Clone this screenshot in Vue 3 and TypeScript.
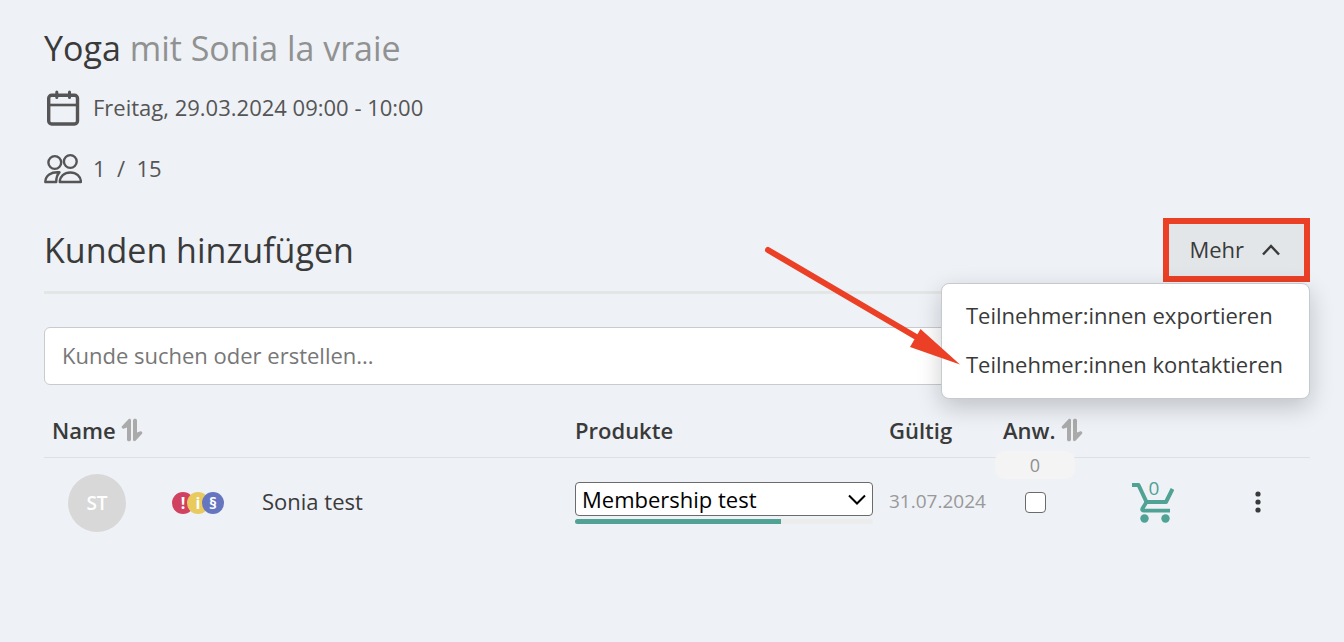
<script setup lang="ts">
import { ref } from 'vue'

interface Participant {
  initials: string
  name: string
  product: string
  usage: number
  validUntil: string
  cart: number
}

const menuOpen = ref(true)
const search = ref('')
const menuItems: string[] = ['Teilnehmer:innen exportieren', 'Teilnehmer:innen kontaktieren']
const participants: Participant[] = [
  { initials: 'ST', name: 'Sonia test', product: 'Membership test', usage: 69, validUntil: '31.07.2024', cart: 0 },
]
</script>

<template>
  <main class="page">
    <h1 class="title">Yoga <span class="teacher">mit Sonia la vraie</span></h1>

    <div class="info">
      <svg class="info-icon" viewBox="0 0 38 38" fill="none" stroke="currentColor" stroke-width="3.400" aria-hidden="true">
        <rect x="4.700" y="7.200" width="28.800" height="28.800" rx="3" />
        <path d="M5 17h28" stroke-width="2.600" />
        <path d="M12.800 4v5.500M25.500 4v5.500" stroke-width="3" stroke-linecap="round" />
      </svg>
      <span>Freitag, 29.03.2024 09:00 - 10:00</span>
    </div>
    <div class="info people">
      <svg class="info-icon" viewBox="0 0 38 38" fill="none" stroke="currentColor" stroke-width="2.400" stroke-linejoin="round" aria-hidden="true">
        <circle cx="10.800" cy="13.500" r="6.400" />
        <circle cx="26.300" cy="12.500" r="6.400" />
        <path d="M15.500 23.300C7 22.500 1.300 26.500 1.300 33h10.900c0-4 .9-7.300 3.300-9.700z" />
        <path d="M15.800 33c0-5.500 4.500-9.500 10.500-9.500S36.900 27.500 36.900 33z" />
      </svg>
      <span class="count">1&nbsp; /&nbsp; 15</span>
    </div>

    <header class="section-head">
      <h2 class="section-title">Kunden hinzufügen</h2>
      <div class="more">
        <button class="more-button" type="button" :aria-expanded="menuOpen" @click="menuOpen = !menuOpen">
          Mehr
          <svg width="20" height="20" viewBox="0 0 20 20" fill="none" stroke="currentColor" stroke-width="2.500" aria-hidden="true">
            <path d="M2 15.500L10 7l8 8.500" />
          </svg>
        </button>
        <div v-if="menuOpen" class="menu">
          <button v-for="item in menuItems" :key="item" class="menu-item" type="button">{{ item }}</button>
          <svg class="pointer" width="200" height="124" viewBox="0 0 200 124" aria-hidden="true">
            <path d="M6 6L156 94" stroke="#eb4025" stroke-width="6" stroke-linecap="round" />
            <path d="M198 120.500L158.500 85 148 103z" fill="#eb4025" />
          </svg>
        </div>
      </div>
    </header>

    <input v-model="search" class="search" type="text" aria-label="Kunde suchen oder erstellen" placeholder="Kunde suchen oder erstellen..." />

    <table class="list">
      <colgroup>
        <col class="c-avatar" />
        <col class="c-flags" />
        <col />
        <col class="c-product" />
        <col class="c-valid" />
        <col class="c-present" />
        <col class="c-cart" />
        <col class="c-actions" />
      </colgroup>
      <thead>
        <tr>
          <th colspan="3" scope="col">
            <span class="sortable">Name
              <svg width="22" height="24" viewBox="0 0 22 24" aria-hidden="true">
                <path d="M7.500 1.200C8.500.3 10 .8 10 2.200V21.500c0 1.200-.8 1.800-2 1.800s-2-.6-2-1.800V9.500L3.200 10.500C1.500 11.200 0 9.700.9 8.300z" fill="#aaa" />
                <path d="M14.500 22.800c-1 .9-2.500.4-2.500-1V2.500C12 1.300 12.800.7 14 .7s2 .6 2 1.800v12l2.800-1c1.700-.7 3.200.8 2.300 2.200z" fill="#aaa" />
              </svg>
            </span>
          </th>
          <th scope="col">Produkte</th>
          <th scope="col">Gültig</th>
          <th scope="col">
            <span class="sortable">Anw.
              <svg width="22" height="24" viewBox="0 0 22 24" aria-hidden="true">
                <path d="M7.500 1.200C8.500.3 10 .8 10 2.200V21.500c0 1.200-.8 1.800-2 1.800s-2-.6-2-1.800V9.500L3.200 10.500C1.500 11.200 0 9.700.9 8.300z" fill="#aaa" />
                <path d="M14.500 22.800c-1 .9-2.500.4-2.500-1V2.500C12 1.300 12.800.7 14 .7s2 .6 2 1.800v12l2.800-1c1.700-.7 3.200.8 2.300 2.200z" fill="#aaa" />
              </svg>
            </span>
            <span class="present-count">0</span>
          </th>
          <th></th>
          <th></th>
        </tr>
      </thead>
      <tbody>
        <tr v-for="p in participants" :key="p.name">
          <td><span class="avatar">{{ p.initials }}</span></td>
          <td>
            <span class="flags">
              <span class="flag red">!</span><span class="flag yellow">i</span><span class="flag blue">§</span>
            </span>
          </td>
          <td class="name">{{ p.name }}</td>
          <td>
            <div class="product">
              <div class="select-wrap">
                <select class="select" aria-label="Produkt">
                  <option>{{ p.product }}</option>
                </select>
                <svg class="chevron" width="18" height="12" viewBox="0 0 18 12" fill="none" stroke="#000" stroke-width="2" aria-hidden="true">
                  <path d="M1 1.500l8 8 8-8" />
                </svg>
              </div>
              <div class="bar"><div class="bar-fill" :style="{ width: p.usage + '%' }"></div></div>
            </div>
          </td>
          <td class="valid">{{ p.validUntil }}</td>
          <td class="present"><input class="check" type="checkbox" :aria-label="p.name + ' anwesend'" /></td>
          <td class="center">
            <button class="cart" type="button" aria-label="Warenkorb">
              <svg width="42" height="42" viewBox="0 0 42 42" fill="none" stroke="currentColor" stroke-width="4" aria-hidden="true">
                <path d="M0 4h6.500l8 17h19.500l6.500-13" stroke-linejoin="round" />
                <path d="M14.500 21l-4 6.500c-.8 1.500 0 2.200 1.500 2.200H38" stroke-width="3.800" />
                <circle cx="12.500" cy="37.500" r="4.200" fill="currentColor" stroke="none" />
                <circle cx="33.500" cy="37.500" r="4.200" fill="currentColor" stroke="none" />
              </svg>
              <span class="cart-count">{{ p.cart }}</span>
            </button>
          </td>
          <td class="center">
            <button class="dots" type="button" aria-label="Aktionen">
              <svg width="6" height="22" viewBox="0 0 6 22" fill="currentColor" aria-hidden="true">
                <circle cx="3" cy="3" r="2.600" />
                <circle cx="3" cy="11" r="2.600" />
                <circle cx="3" cy="19" r="2.600" />
              </svg>
            </button>
          </td>
        </tr>
      </tbody>
    </table>
  </main>
</template>

<style>
body {
  margin: 0;
  background: #eef1f6;
}
</style>

<style scoped>
.page {
  box-sizing: border-box;
  padding: 24px 34px 24px 44px;
  font-family: 'Open Sans', 'Noto Sans', sans-serif;
  font-size: 22px;
  line-height: 32px;
  color: #3a3a3a;
}
.page *,
.page *::before {
  box-sizing: border-box;
}
button,
input,
select {
  font: inherit;
  color: inherit;
}
button {
  padding: 0;
  border: 0;
  background: none;
  cursor: pointer;
}
svg {
  display: block;
  flex: none;
}
h1,
h2 {
  margin: 0;
  font-size: 34px;
  line-height: 48px;
  font-weight: 400;
}
.teacher {
  color: #919191;
}
.info {
  display: flex;
  align-items: center;
  gap: 11px;
  margin-top: 16px;
  color: #555;
}
.people {
  margin-top: 23px;
}
.info-icon {
  width: 38px;
  height: 38px;
}
.section-head {
  display: flex;
  align-items: center;
  justify-content: space-between;
  height: 76px;
  margin-top: 31px;
  padding-bottom: 10px;
  border-bottom: 3px solid #e4e5e5;
}
.more {
  position: relative;
}
.more-button {
  display: flex;
  align-items: center;
  gap: 17px;
  height: 64px;
  padding: 0 23px 2px 20px;
  border: 6px solid #eb4025;
  background: #e2e6e9;
}
.menu {
  position: absolute;
  z-index: 2;
  top: 100%;
  right: 0;
  display: flex;
  flex-direction: column;
  gap: 17px;
  min-width: 369px;
  margin-top: 1px;
  padding: 15px 24px 18px;
  border: 1px solid #c5cace;
  border-radius: 8px;
  background: #fff;
  box-shadow: 0 8px 24px rgba(0, 0, 0, 0.2);
}
.menu-item {
  text-align: left;
  white-space: nowrap;
}
.pointer {
  position: absolute;
  right: 347px;
  bottom: 30px;
  pointer-events: none;
}
.search {
  display: block;
  width: 100%;
  height: 58px;
  margin-top: 33px;
  padding: 0 17px 2px;
  border: 1px solid #c8cbce;
  border-radius: 6px;
  background: #fff;
}
.search::placeholder {
  color: #777;
  opacity: 1;
}
.list {
  width: 100%;
  margin-top: 19px;
  border-collapse: collapse;
  table-layout: fixed;
}
.c-avatar {
  width: 120px;
}
.c-flags {
  width: 90px;
}
.c-product {
  width: 314px;
}
.c-valid {
  width: 114px;
}
.c-present {
  width: 105px;
}
.c-cart {
  width: 106px;
}
.c-actions {
  width: 104px;
}
th {
  position: relative;
  height: 53px;
  padding: 0 0 0 8px;
  border-bottom: 1px solid #dde1e4;
  font-weight: 600;
  text-align: left;
  white-space: nowrap;
}
td {
  height: 92px;
  padding: 0 0 0 8px;
}
.sortable {
  display: flex;
  align-items: center;
  gap: 5px;
}
.present-count {
  position: absolute;
  top: 47px;
  left: 0;
  width: 80px;
  border-radius: 10px;
  background: #f4f4f5;
  color: #909090;
  font-size: 18px;
  line-height: 28px;
  font-weight: 400;
  text-align: center;
}
.avatar {
  display: block;
  width: 58px;
  height: 58px;
  margin-left: 16px;
  border-radius: 50%;
  background: #d8d8d8;
  color: #fff;
  font-size: 19px;
  line-height: 58px;
  font-weight: 600;
  text-align: center;
}
.flags {
  display: flex;
}
.flag {
  width: 22px;
  height: 22px;
  border-radius: 50%;
  color: #fff;
  font-size: 16px;
  line-height: 22px;
  font-weight: 700;
  text-align: center;
}
.flag + .flag {
  margin-left: -7px;
}
.red {
  background: #d0425f;
}
.yellow {
  background: #e9ca5f;
}
.blue {
  background: #6675bf;
}
.name {
  padding-bottom: 4px;
}
.product {
  width: 298px;
}
.select-wrap {
  position: relative;
}
.select {
  display: block;
  width: 100%;
  height: 34px;
  padding: 0 32px 2px 6px;
  border: 1px solid #6b6b6b;
  border-radius: 4px;
  background: #fff;
  color: #000;
  appearance: none;
}
.chevron {
  position: absolute;
  top: 12px;
  right: 7px;
  pointer-events: none;
}
.bar {
  height: 5px;
  margin-top: 3px;
  overflow: hidden;
  border-radius: 3px;
  background: #ececec;
}
.bar-fill {
  height: 100%;
  background: #4fa294;
}
.valid {
  padding-bottom: 4px;
  color: #999;
  font-size: 19px;
}
.present {
  padding: 0 0 2px;
}
.check {
  display: block;
  width: 21px;
  height: 21px;
  margin: 0 0 0 30px;
  border: 1px solid #6b6b6b;
  border-radius: 4px;
  background: #fff;
  appearance: none;
}
.check:checked {
  background: #4fa294;
}
.center {
  padding: 0 0 2px;
}
.center button {
  position: relative;
  display: block;
  margin: 0 auto;
}
.cart {
  color: #4fa294;
}
.cart-count {
  position: absolute;
  top: -5px;
  left: 0;
  width: 44px;
  font-size: 19px;
  line-height: 24px;
  text-align: center;
}
</style>
